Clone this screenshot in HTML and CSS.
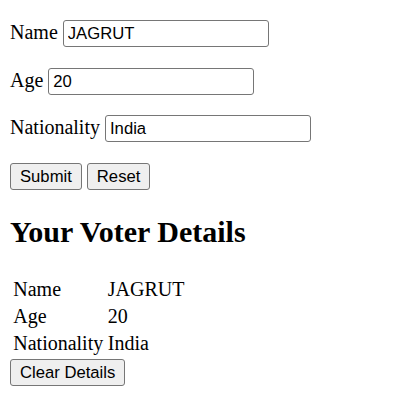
FILE: index.html
```html
<!DOCTYPE html>
<html>
<head>
<meta charset="utf-8">
<title>Voter Details</title>
<link rel="stylesheet" href="styles.css">
</head>
<body>
<form class="voter-form">
  <div class="field"><label class="field-label">Name</label><input class="text-input" type="text" value="JAGRUT"></div>
  <div class="field"><label class="field-label">Age</label><input class="text-input" type="text" value="20"></div>
  <div class="field"><label class="field-label">Nationality</label><input class="text-input" type="text" value="India"></div>
  <div class="actions"><button class="btn" type="button">Submit</button><button class="btn" type="button">Reset</button></div>
</form>
<h2 class="title">Your Voter Details</h2>
<table class="details">
  <tr><td>Name</td><td>JAGRUT</td></tr>
  <tr><td>Age</td><td>20</td></tr>
  <tr><td>Nationality</td><td>India</td></tr>
</table>
<div class="clear-row"><button class="btn" type="button">Clear Details</button></div>
</body>
</html>
```
FILE: styles.css
```css
html, body {
  background: #ffffff;
}
body {
  margin: 10px;
  font-family: "Liberation Serif", "Times New Roman", serif;
  font-size: 20px;
  color: #000000;
}
.voter-form {
  display: flex;
  flex-direction: column;
  gap: 20.7px;
  padding-top: 10px;
  margin: 0;
}
.field {
  display: flex;
  align-items: baseline;
  gap: 5px;
}
.field-label {
  line-height: 23px;
}
.text-input {
  box-sizing: border-box;
  width: 206px;
  height: 27px;
  margin: 0;
  padding: 3.25px 4px 2.25px;
  border: 1px solid #767676;
  border-radius: 3px;
  background: #ffffff;
  font-family: "Liberation Sans", Arial, sans-serif;
  font-size: 16.67px;
  color: #000000;
  outline: none;
}
.actions {
  display: flex;
  gap: 5px;
}
.btn {
  box-sizing: border-box;
  height: 27px;
  margin: 0;
  padding: 3.25px 9px 2.25px;
  border: 1px solid #767676;
  border-radius: 3px;
  background: #efefef;
  font-family: "Liberation Sans", Arial, sans-serif;
  font-size: 16.67px;
  line-height: normal;
  color: #000000;
}
.title {
  margin: 25px 0;
  font-size: 30px;
  font-weight: bold;
  line-height: 34.5px;
}
.details {
  border-spacing: 2.5px;
  border-collapse: separate;
  margin: 0;
}
.details td {
  padding: 1.25px;
  line-height: 22.5px;
  font-size: 20px;
}
.clear-row {
  display: flex;
  padding-top: 1px;
}
```
